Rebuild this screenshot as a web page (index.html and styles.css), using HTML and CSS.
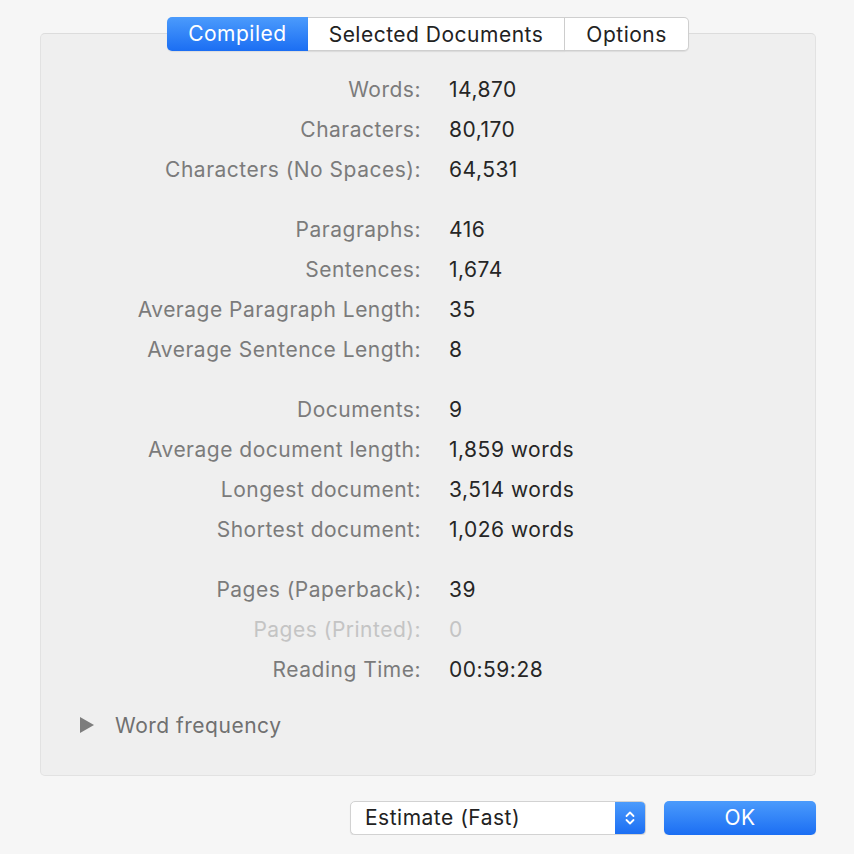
FILE: index.html
```html
<!DOCTYPE html>
<html lang="en">
<head>
    <meta charset="UTF-8">
    <title>Statistics</title>
    <link rel="stylesheet" href="styles.css">
</head>
<body>
    <div class="dialog">
        <div class="tabs">
            <div class="tab tab-active">Compiled</div>
            <div class="tab">Selected Documents</div>
            <div class="tab">Options</div>
        </div>

        <div class="panel">
            <div class="stats">
                <div class="group">
                    <span class="label">Words:</span><span class="value">14,870</span>
                    <span class="label">Characters:</span><span class="value">80,170</span>
                    <span class="label">Characters (No Spaces):</span><span class="value">64,531</span>
                </div>
                <div class="group">
                    <span class="label">Paragraphs:</span><span class="value">416</span>
                    <span class="label">Sentences:</span><span class="value">1,674</span>
                    <span class="label">Average Paragraph Length:</span><span class="value">35</span>
                    <span class="label">Average Sentence Length:</span><span class="value">8</span>
                </div>
                <div class="group">
                    <span class="label">Documents:</span><span class="value">9</span>
                    <span class="label">Average document length:</span><span class="value">1,859 words</span>
                    <span class="label">Longest document:</span><span class="value">3,514 words</span>
                    <span class="label">Shortest document:</span><span class="value">1,026 words</span>
                </div>
                <div class="group">
                    <span class="label">Pages (Paperback):</span><span class="value">39</span>
                    <span class="label disabled">Pages (Printed):</span><span class="value disabled">0</span>
                    <span class="label">Reading Time:</span><span class="value">00:59:28</span>
                </div>
            </div>

            <div class="disclosure">
                <span class="triangle"></span>
                <span class="disclosure-label">Word frequency</span>
            </div>
        </div>

        <div class="footer">
            <div class="select">
                <span class="select-text">Estimate (Fast)</span>
                <span class="select-arrows">
                    <svg width="12" height="18" viewBox="0 0 12 18">
                        <path d="M2.5 7 L6 3.5 L9.5 7 M2.5 11 L6 14.5 L9.5 11" fill="none" stroke="#fff" stroke-width="1.8" stroke-linecap="round" stroke-linejoin="round"/>
                    </svg>
                </span>
            </div>
            <div class="button-ok">OK</div>
        </div>
    </div>
</body>
</html>
```

FILE: styles.css
```css
* {
    margin: 0;
    padding: 0;
    box-sizing: border-box;
}

body {
    background-color: #f6f6f6;
    font-family: Inter, 'Liberation Sans', Arial, sans-serif;
    font-size: 21px;
    letter-spacing: 0.5px;
    color: #262626;
}

.dialog {
    padding: 17px 38px 0 40px;
}

/* segmented tab control */
.tabs {
    display: flex;
    justify-content: center;
    position: relative;
    z-index: 1;
}

.tab {
    height: 34px;
    line-height: 34px;
    padding: 0 21px;
    background-color: #fff;
    border: 1px solid #cfcfcf;
    border-left: none;
    color: #222;
    box-shadow: 0 1px 1px rgba(0, 0, 0, 0.08);
}

.tab:last-child {
    border-radius: 0 5px 5px 0;
}

.tab-active {
    border: none;
    border-radius: 5px 0 0 5px;
    background: linear-gradient(#4b9bfc, #1b6ef3);
    color: #fff;
}

.panel {
    margin-top: -18px;
    background-color: #efefef;
    border: 1px solid #e2e2e2;
    border-top-color: #dcdcdc;
    border-radius: 5px;
    padding: 35px 0 30px;
    height: 743px;
}

.group {
    display: grid;
    grid-template-columns: 380px 1fr;
    column-gap: 28px;
    grid-auto-rows: 40px;
    align-items: center;
    margin-bottom: 20px;
}

.label {
    text-align: right;
    color: #7b7b7b;
}

.value {
    color: #262626;
}

.disabled {
    color: #c4c4c4;
}

.disclosure {
    display: flex;
    align-items: center;
    height: 40px;
    margin-top: -4px;
    padding-left: 39px;
}

.triangle {
    width: 0;
    height: 0;
    border-top: 8px solid transparent;
    border-bottom: 8px solid transparent;
    border-left: 14px solid #7d7d7d;
    margin-right: 21px;
}

.disclosure-label {
    color: #707070;
}

.footer {
    display: flex;
    justify-content: flex-end;
    gap: 18px;
    margin-top: 25px;
}

.select {
    width: 296px;
    height: 34px;
    display: flex;
    background-color: #fff;
    border: 1px solid #d2d2d2;
    border-radius: 5px;
    box-shadow: 0 1px 1px rgba(0, 0, 0, 0.1);
    overflow: hidden;
}

.select-text {
    flex: 1;
    line-height: 32px;
    padding-left: 14px;
    color: #222;
}

.select-arrows {
    width: 30px;
    display: flex;
    align-items: center;
    justify-content: center;
    background: linear-gradient(#4b9bfc, #1b6ef3);
}

.button-ok {
    width: 152px;
    height: 34px;
    line-height: 34px;
    text-align: center;
    color: #fff;
    border-radius: 5px;
    background: linear-gradient(#4b9bfc, #1b6ef3);
    box-shadow: 0 1px 1px rgba(0, 0, 0, 0.12);
}
```
